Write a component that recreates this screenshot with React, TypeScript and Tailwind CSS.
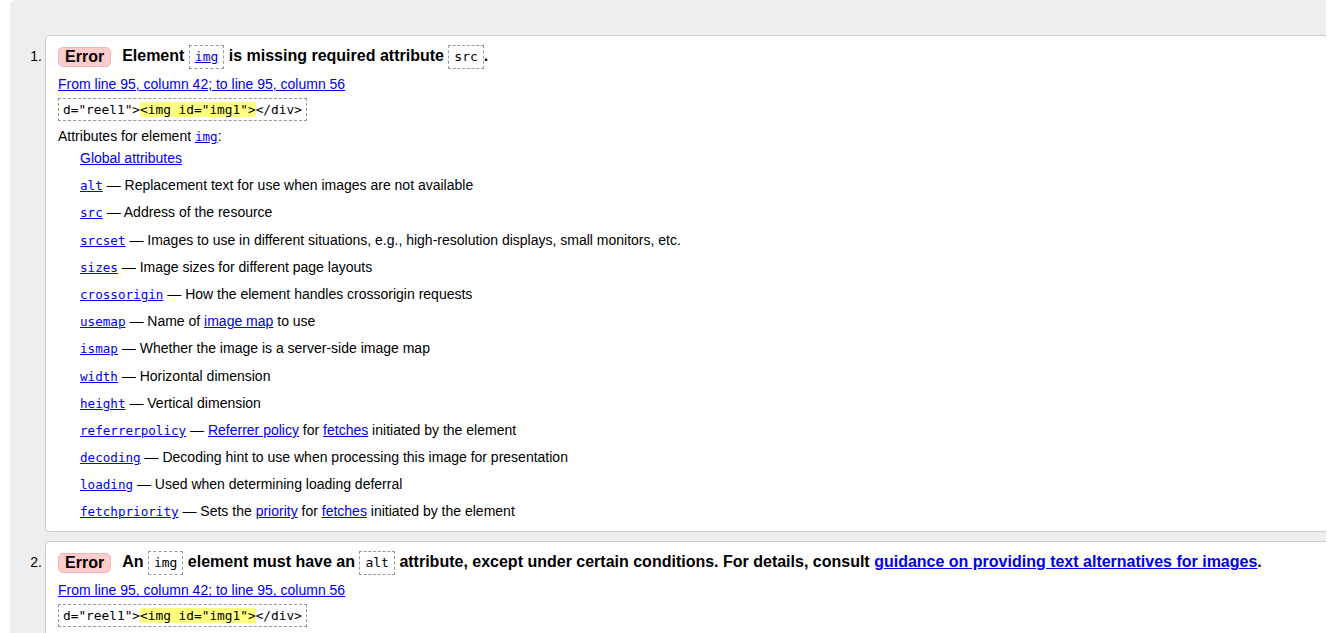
import React from "react";

const sans = "font-['Liberation_Sans',Arial,sans-serif]";
const mono = "font-['DejaVu_Sans_Mono',monospace]";

function Code({ children, link }: { children: React.ReactNode; link?: boolean }) {
  return (
    <span
      className={`${mono} inline-block align-middle border border-dashed border-[#999] px-[5px] leading-[22px] text-[13px] font-normal ${
        link ? "text-[#0000ee] underline" : "text-black"
      }`}
    >
      {children}
    </span>
  );
}

function Badge() {
  return (
    <span className="inline-block align-middle rounded-[5px] border border-[#eab8b8] bg-[#fcc] px-[6px] leading-[18px] text-[16px] font-bold text-black mr-[11px]">
      Error
    </span>
  );
}

function Extract() {
  return (
    <div className="mt-[5px] h-[23px]">
      <span className={`${mono} inline-block border border-dashed border-[#999] px-[4px] leading-[21px] text-[12.8px] text-black whitespace-pre`}>
        {'d="reel1">'}
        <span className="bg-[#ffff80]">{'<img id="img1">'}</span>
        {"</div>"}
      </span>
    </div>
  );
}

function Loc() {
  return (
    <div className="mt-[6px] h-[18px] leading-[18px]">
      <a className="text-[#0000ee] underline">From line 95, column 42; to line 95, column 56</a>
    </div>
  );
}

function A({ children }: { children: React.ReactNode }) {
  return <a className="text-[#0000ee] underline">{children}</a>;
}

function M({ children }: { children: React.ReactNode }) {
  return <a className={`${mono} text-[12.6px] leading-none text-[#0000ee] underline`}>{children}</a>;
}

const items: [string, React.ReactNode][] = [
  ["alt", "Replacement text for use when images are not available"],
  ["src", "Address of the resource"],
  ["srcset", "Images to use in different situations, e.g., high-resolution displays, small monitors, etc."],
  ["sizes", "Image sizes for different page layouts"],
  ["crossorigin", "How the element handles crossorigin requests"],
  ["usemap", <>Name of <A>image map</A> to use</>],
  ["ismap", "Whether the image is a server-side image map"],
  ["width", "Horizontal dimension"],
  ["height", "Vertical dimension"],
  ["referrerpolicy", <><A>Referrer policy</A> for <A>fetches</A> initiated by the element</>],
  ["decoding", "Decoding hint to use when processing this image for presentation"],
  ["loading", "Used when determining loading deferral"],
  ["fetchpriority", <>Sets the <A>priority</A> for <A>fetches</A> initiated by the element</>],
];

export default function App() {
  return (
    <div className={`${sans} w-[1327px] h-[633px] overflow-hidden bg-white text-[14px] text-black`}>
      <div className="ml-[10px] w-[1316px] h-[633px] overflow-hidden rounded-tl-[6px] bg-[#eeeeee] pt-[35px]">
        <ol className="flex flex-col gap-[9px]">
          <li className="flex">
            <div className="w-[35px] shrink-0 pr-[3px] pt-[8px] text-right leading-[26px]">1.</div>
            <div className="w-[1400px] shrink-0 rounded-[4px] border border-[#cccccc] bg-white pl-[12px] pt-[7px] pb-[11px]">
              <div className="h-[26px] leading-[26px] text-[16px] font-bold whitespace-nowrap">
                <Badge />
                Element <Code link>img</Code> is missing required attribute <Code>src</Code>.
              </div>
              <Loc />
              <Extract />
              <div className="mt-[6px] h-[18px] leading-[18px]">
                Attributes for element <M>img</M>:
              </div>
              <div className="pl-[22px]">
                <div className="mt-[4px] h-[18px] leading-[18px]">
                  <A>Global attributes</A>
                </div>
                {items.map(([k, v]) => (
                  <div key={k} className="mt-[9.2px] h-[18px] leading-[18px]">
                    <M>{k}</M> — {v}
                  </div>
                ))}
              </div>
            </div>
          </li>
          <li className="flex">
            <div className="w-[35px] shrink-0 pr-[3px] pt-[8px] text-right leading-[26px]">2.</div>
            <div className="w-[1400px] shrink-0 rounded-[4px] border border-[#cccccc] bg-white pl-[12px] pt-[7px] pb-[11px]">
              <div className="h-[26px] leading-[26px] text-[16px] font-bold whitespace-nowrap">
                <Badge />
                An <Code>img</Code> element must have an <Code>alt</Code> attribute, except under certain conditions. For details, consult{" "}
                <a className="text-[#0000ee] underline">guidance on providing text alternatives for images</a>.
              </div>
              <Loc />
              <Extract />
            </div>
          </li>
        </ol>
      </div>
    </div>
  );
}
